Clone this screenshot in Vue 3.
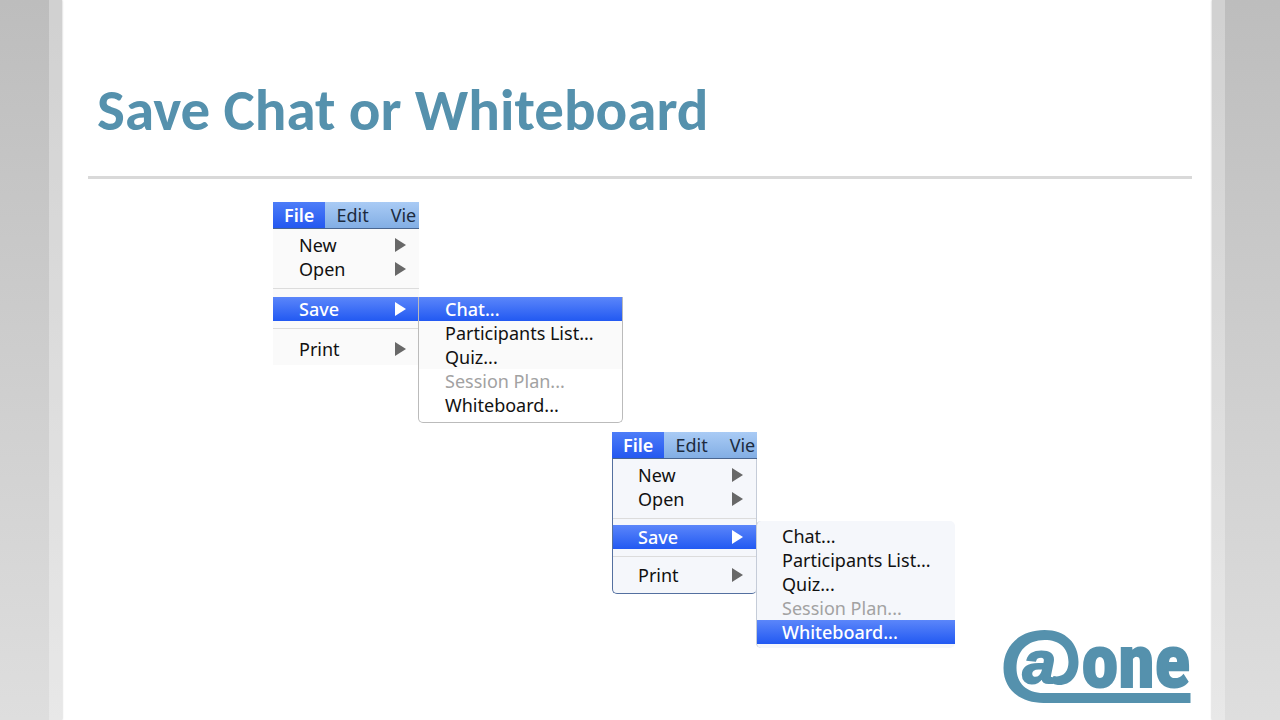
<template>
  <div class="slide">
    <div class="edge edge-left"></div>
    <main class="paper">
      <h1 class="title">Save Chat or Whiteboard</h1>
      <hr class="rule" />

      <section v-for="menu in menus" :key="menu.id" class="menu" :class="menu.id">
        <nav class="menubar">
          <button class="tab active">File</button>
          <button class="tab">Edit</button>
          <button class="tab last">Vie</button>
        </nav>
        <ul class="dropdown">
          <li v-for="item in fileItems" :key="item" :class="{ divided: item === 'Save' || item === 'Print' }">
            <button class="row" :class="{ selected: item === 'Save' }">
              <span>{{ item }}</span>
              <svg class="arrow" viewBox="0 0 11 14" aria-hidden="true"><path d="M0 0 11 7 0 14Z" /></svg>
            </button>
          </li>
        </ul>
        <ul class="submenu">
          <li v-for="item in saveItems" :key="item">
            <button class="row" :class="{ selected: item === menu.selected }" :disabled="item === 'Session Plan...'">{{ item }}</button>
          </li>
        </ul>
      </section>

      <footer class="footer">
        <svg class="logo" viewBox="0 0 188 75" role="img" aria-label="@one">
          <path class="swoosh" d="M187 74H40C16 74 0 60 0 39C0 16 17 1 41 1C62 1 75 14 75 33C75 47 67 56 56 56C52 56 49 55 48 52L50 47C59 49 65 43 65 33C65 19 56 11 41 11C24 11 13 22 13 39C13 54 23 64 40 64H187Z" />
          <text class="mark" x="19" y="54">a</text>
          <text class="word" x="78" y="58">one</text>
        </svg>
      </footer>
    </main>
    <div class="edge edge-right"></div>
  </div>
</template>

<script setup>
const fileItems = ['New', 'Open', 'Save', 'Print']
const saveItems = ['Chat...', 'Participants List...', 'Quiz...', 'Session Plan...', 'Whiteboard...']

const menus = [
  { id: 'first', selected: 'Chat...' },
  { id: 'second', selected: 'Whiteboard...' }
]
</script>

<style>
body { margin: 0; background: #fff; }
</style>

<style scoped>
.slide { display: flex; min-height: 100vh; font-family: "Noto Sans", "Open Sans", sans-serif; }
.edge { flex: none; box-sizing: border-box; background: linear-gradient(#bdbdbd, #dedede); }
.edge-left { width: 62px; border-right: 13px solid rgba(255, 255, 255, 0.3); box-shadow: 0 0 2px #bbb; }
.edge-right { width: 68px; border-left: 13px solid rgba(255, 255, 255, 0.3); box-shadow: 0 0 2px #bbb; }
.paper { flex: 1; min-width: 0; padding: 76px 20px 16px 26px; }

.title { box-sizing: border-box; height: 100px; margin: 0; padding-left: 9px; font-family: Carlito, Lato, sans-serif; font-size: 59px; line-height: 68px; font-weight: 700; color: #5591ad; white-space: nowrap; }
.rule { margin: 0; height: 3px; border: none; background: #d9d9d9; }

.menu { position: relative; width: 146px; }
.first { margin: 23px 0 0 185px; }
.second { width: 145px; margin: 67px 0 0 524px; }

.menubar { display: flex; height: 27px; box-sizing: border-box; background: linear-gradient(#a9cbf5, #82aee4); border-bottom: 1px solid #4a6690; }
.tab { flex: none; padding: 0 11px; border: none; background: none; font-family: inherit; font-size: 18px; line-height: 26px; color: #1c2b40; }
.tab.active { background: linear-gradient(#4d7df8, #2458f0); color: #fff; font-weight: 600; }
.tab.last { padding-right: 0; }

ul { margin: 0; padding: 0; list-style: none; }
.dropdown { padding: 4px 0; background: #fafafa; }
.second .dropdown { padding-bottom: 6px; background: #f5f7fb; border: 1px solid #5470a0; border-top: none; border-right-color: #c5ccd8; border-radius: 0 0 5px 5px; }
.divided { position: relative; padding-top: 16px; }
.second .divided { padding-top: 14px; }
.divided::before { content: ""; position: absolute; top: 7px; left: 0; right: 0; height: 1px; background: #dcdcdc; }

.row { display: flex; align-items: center; justify-content: space-between; width: 100%; height: 24px; padding: 0 13px 0 26px; border: none; background: none; font-family: inherit; font-size: 18px; line-height: 22px; color: #111; text-align: left; white-space: nowrap; }
.second .row { padding-left: 25px; }
.row:disabled { color: #a2a2a2; }
.row.selected { background: linear-gradient(#5b86fa, #2259f2); color: #fff; font-weight: 500; }
.arrow { width: 11px; height: 14px; fill: #686868; }
.selected .arrow { fill: #fff; }

.submenu { position: absolute; top: 95px; left: 145px; width: 205px; box-sizing: border-box; padding-bottom: 5px; background: linear-gradient(#fafafa 58%, #fff 58%); border: solid #bbb; border-width: 0 1px 1px; border-radius: 0 0 5px 5px; }
.second .submenu { top: 89px; left: 144px; width: 199px; padding: 3px 0 4px; background: #f5f7fb; border-color: #c5ccd8; border-width: 0 0 0 1px; border-radius: 5px; }

.footer { display: flex; justify-content: flex-end; margin-top: 35px; }
.logo { width: 189px; height: 75px; overflow: visible; }
.swoosh { fill: #5591ad; }
.mark { fill: #5591ad; stroke: #5591ad; stroke-width: 2; font-family: "Liberation Sans", sans-serif; font-size: 60px; font-weight: 700; font-style: italic; }
.word { fill: #5591ad; stroke: #5591ad; stroke-width: 2; font-family: "Roboto Condensed", "Liberation Sans Narrow", sans-serif; font-size: 74px; font-weight: 700; }
</style>
